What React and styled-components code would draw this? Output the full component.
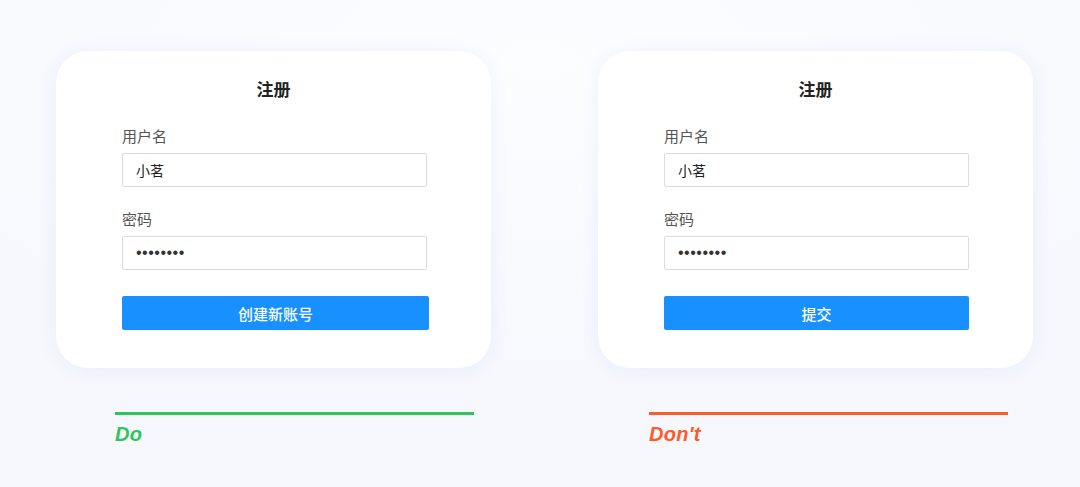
import styled, { createGlobalStyle } from "styled-components";

const GlobalStyle = createGlobalStyle`
    html, body {
        margin: 0;
        padding: 0;
    }
    body {
        font-family: "Noto Sans CJK SC", "Noto Sans", sans-serif;
        background: #f7f9fd;
    }
`

const Page = styled.div`
    width: 1080px;
    height: 487px;
    box-sizing: border-box;
    padding: 51px 0 0 56px;
    background: radial-gradient(ellipse 700px 320px at 540px 60px, #fcfdff 0%, #f6f8fd 100%);
    display: grid;
    grid-template-columns: 435px 435px;
    column-gap: 107px;
    overflow: hidden;
`

const Column = styled.div`
    display: flex;
    flex-direction: column;
`

const Card = styled.div`
    height: 317px;
    box-sizing: border-box;
    background: #fff;
    border-radius: 32px;
    box-shadow: 0 2px 18px rgba(110, 120, 255, 0.09);
    padding: 27px 0 0 66px;
    display: flex;
    flex-direction: column;
`

const Title = styled.h2`
    margin: 0 66px 0 0;
    text-align: center;
    font-size: 17px;
    font-weight: 700;
    color: #222;
    line-height: 22px;
`

const Label = styled.div`
    margin-top: ${p => p.$top}px;
    font-size: 15px;
    color: #555;
    line-height: 20px;
`

const Input = styled.div`
    margin-top: 7px;
    width: 305px;
    height: 34px;
    box-sizing: border-box;
    border: 1px solid #dcdcdc;
    border-radius: 2px;
    padding: 0 13px;
    display: flex;
    align-items: center;
    font-size: 14px;
    color: #222;
`

const Dots = styled.span`
    font-family: "Liberation Sans", Arial, sans-serif;
    font-size: 16px;
    letter-spacing: 0.5px;
    color: #333;
`

const Button = styled.div`
    margin-top: 26px;
    width: ${p => p.$w}px;
    height: 34px;
    background: #1890ff;
    border-radius: 2px;
    color: #fff;
    font-size: 15px;
    font-weight: 500;
    display: flex;
    align-items: center;
    justify-content: center;
`

const Footer = styled.div`
    margin: 44px 0 0 ${p => p.$offset}px;
    width: 359px;
`

const Line = styled.div`
    height: 3px;
    background: ${p => p.$color};
`

const Verdict = styled.div`
    margin-top: 7px;
    font-family: "Liberation Sans", Arial, sans-serif;
    font-style: italic;
    font-weight: 700;
    font-size: 20px;
    line-height: 24px;
    letter-spacing: 0.3px;
    color: ${p => p.$color};
`

const RegisterCard = ({ button, buttonWidth }) => (
    <Card>
        <Title>注册</Title>
        <Label $top={26}>用户名</Label>
        <Input>小茗</Input>
        <Label $top={22}>密码</Label>
        <Input><Dots>••••••••</Dots></Input>
        <Button $w={buttonWidth}>{button}</Button>
    </Card>
)

const App = () => {
    return (
        <>
            <GlobalStyle />
            <Page>
                <Column>
                    <RegisterCard button="创建新账号" buttonWidth={307} />
                    <Footer $offset={59}>
                        <Line $color="#2fc55b" />
                        <Verdict $color="#2fc55b">Do</Verdict>
                    </Footer>
                </Column>
                <Column>
                    <RegisterCard button="提交" buttonWidth={305} />
                    <Footer $offset={51}>
                        <Line $color="#ff5a2c" />
                        <Verdict $color="#ff5a2c">Don't</Verdict>
                    </Footer>
                </Column>
            </Page>
        </>
    )
}

export default App
